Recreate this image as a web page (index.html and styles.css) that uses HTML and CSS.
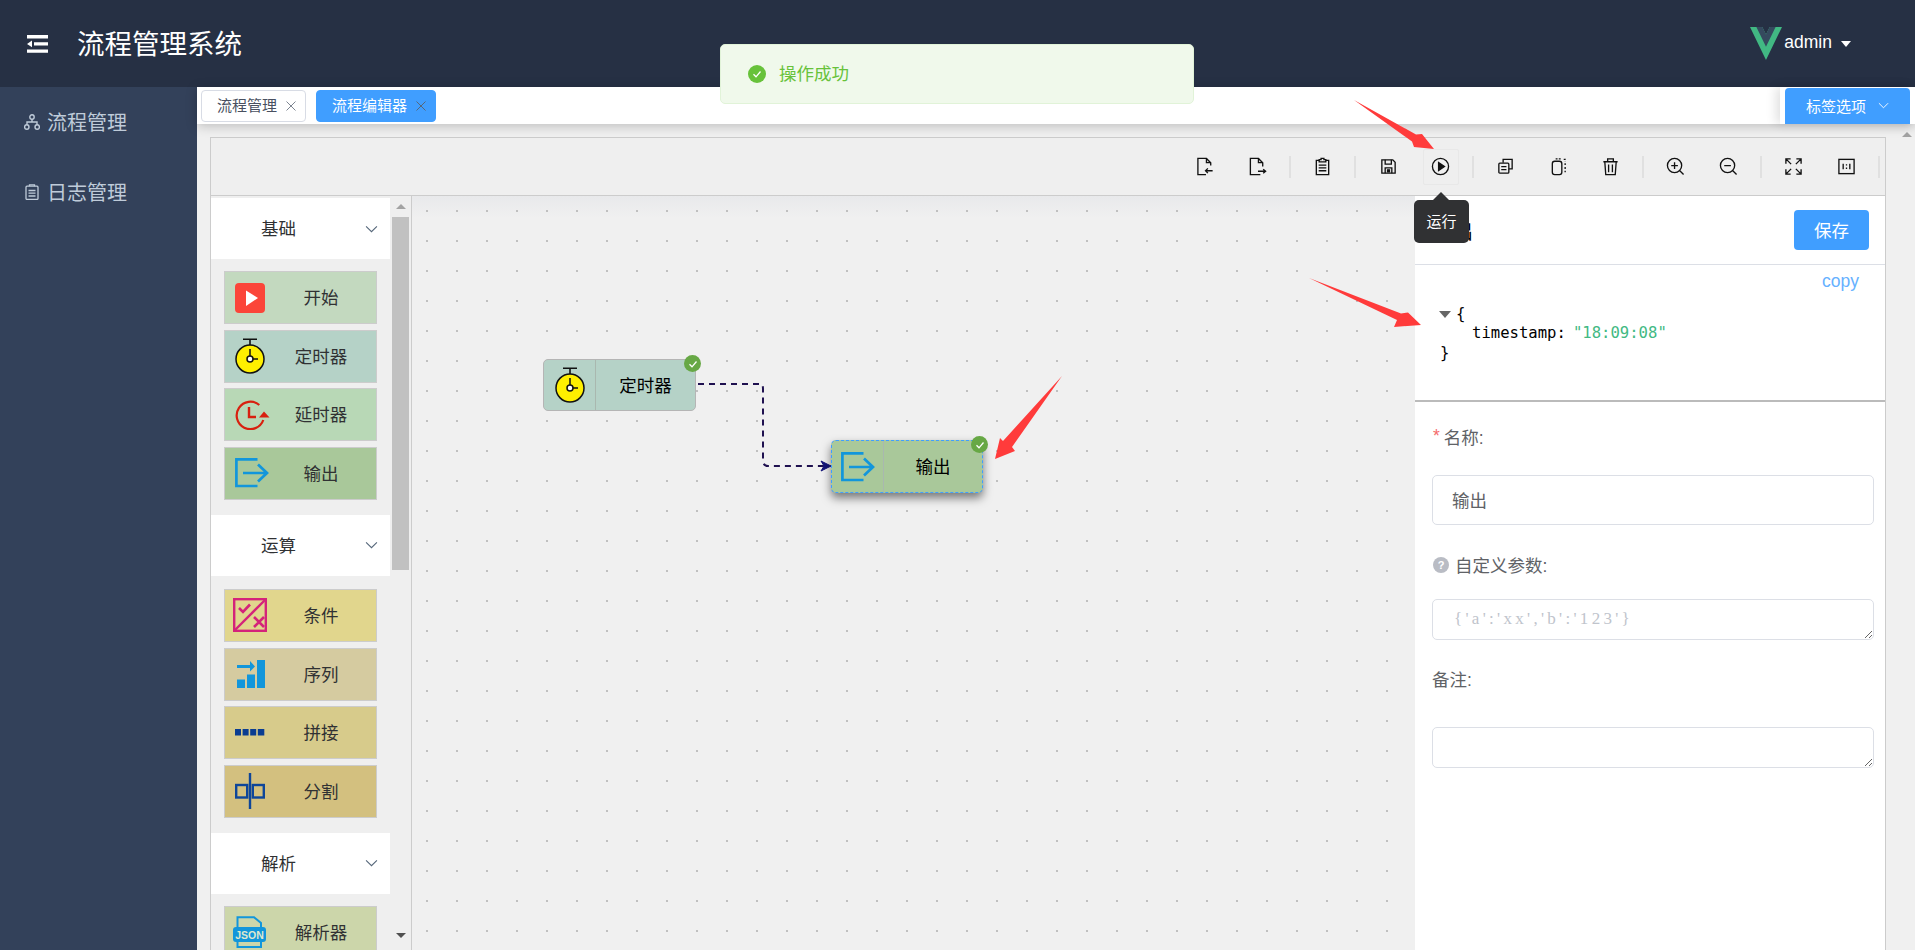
FILE: index.html
```html
<!DOCTYPE html>
<html lang="zh-CN">
<head>
  <meta charset="UTF-8" />
  <title>流程管理系统</title>
  <link rel="stylesheet" href="styles.css">
</head>
<body>
  <svg class="svg-defs" xmlns="http://www.w3.org/2000/svg">
    <symbol id="i-timer" viewBox="0 0 30 36">
      <path d="M8 1.2H22M15 1.2V7" fill="none" stroke="#111" stroke-width="1.6"/>
      <circle cx="15" cy="21" r="14" fill="#ffef00" stroke="#111" stroke-width="1.5"/>
      <path d="M15 11V18M18 21H23" fill="none" stroke="#111" stroke-width="1.5"/>
      <circle cx="15" cy="21" r="3" fill="#fff" stroke="#111" stroke-width="1.5"/>
    </symbol>
    <symbol id="i-output" viewBox="0 0 34 30">
      <path d="M22.5 1.4H1.4V28H22.5" fill="none" stroke="#1296db" stroke-width="2.7"/>
      <path d="M8 15H31M23 6.5L32 15L23 23.5" fill="none" stroke="#1296db" stroke-width="2.7"/>
    </symbol>
  </svg>

  <header class="navbar">
    <svg class="fold" viewBox="0 0 21 18">
      <path d="M0 0H21V3.4H0ZM0 14.4H21V17.8H0ZM7 7.2H21V10.6H7ZM0 8.9L5 5.6V12.2Z" fill="#fff"/>
    </svg>
    <h1 class="app-title">流程管理系统</h1>
    <div class="user">
      <svg class="vue-logo" viewBox="0 0 261.76 226.69" preserveAspectRatio="none">
        <path d="M161.096.001l-30.225 52.351L100.647.001H-.005l130.877 226.688L261.749.001z" fill="#41b883"/>
        <path d="M161.096.001l-30.225 52.351L100.647.001H52.346l78.526 136.01L209.398.001z" fill="#35495e"/>
      </svg>
      <span class="user-name">admin</span>
      <span class="caret"></span>
    </div>
  </header>

  <div class="layout">
    <aside class="sidebar">
      <a class="menu-item">
        <svg class="menu-icon" viewBox="0 0 16 16" fill="none" stroke="#bfcbd9" stroke-width="1.4">
          <circle cx="8" cy="3" r="2.2"/><circle cx="2.8" cy="13" r="2.2"/><circle cx="13.2" cy="13" r="2.2"/>
          <path d="M8 5.2V8M3 10.8V8H13V10.8"/>
        </svg>
        <span class="menu-text">流程管理</span>
      </a>
      <a class="menu-item">
        <svg class="menu-icon" viewBox="0 0 16 16" fill="none" stroke="#bfcbd9" stroke-width="1.3">
          <rect x="2" y="2.2" width="12" height="13.2" rx="1"/>
          <path d="M5.5 2.2V.8H10.5V2.2M4.5 6.5H11.5M4.5 9.2H11.5M4.5 12H11.5"/>
        </svg>
        <span class="menu-text">日志管理</span>
      </a>
    </aside>

    <main class="content">
      <div class="tags-bar">
        <span class="tag"><span class="tag-text">流程管理</span>
          <svg class="tag-close" viewBox="0 0 10 10"><path d="M.5 .5L9.5 9.5M9.5 .5L.5 9.5"/></svg>
        </span>
        <span class="tag tag-active"><span class="tag-text">流程编辑器</span>
          <svg class="tag-close" viewBox="0 0 10 10"><path d="M.5 .5L9.5 9.5M9.5 .5L.5 9.5"/></svg>
        </span>
        <div class="tag-options">
          <button class="tag-options-btn">标签选项
            <svg class="chevron chevron-white" viewBox="0 0 12 7"><path d="M1 1L6 6L11 1"/></svg>
          </button>
        </div>
      </div>

      <div class="page">
        <div class="editor">
          <div class="toolbar">
            <span class="tool" title="导入">
              <svg viewBox="0 0 20 20"><path d="M15.500 9V6L11 1.500H2V18.500H10.500"/><path d="M11 1.500V6H15.500"/><path d="M17.500 14.500H10M12.500 12L10 14.500L12.500 17"/></svg>
            </span>
            <span class="tool" title="导出">
              <svg viewBox="0 0 20 20"><path d="M15.500 10V6L11 1.500H2.500V18.500H13"/><path d="M11 1.500V6H15.500"/><path d="M10.500 15H18M16 13L18.500 15L16 17"/></svg>
            </span>
            <span class="tool-sep"></span>
            <span class="tool" title="粘贴板">
              <svg viewBox="0 0 20 20"><path d="M6.500 3.500H3.500V18.500H16.500V3.500H13.500"/><path d="M6.500 5.200V2.700H8.500V1.500H11.500V2.700H13.500V5.200Z"/><path d="M6 8.500H14M6 11.500H14M6 14.500H14"/></svg>
            </span>
            <span class="tool-sep"></span>
            <span class="tool" title="保存">
              <svg viewBox="0 0 20 20"><path d="M3 3H14.500L17 5.500V17H3Z"/><path d="M6.500 3V7.500H13V3M6.500 17V11.500H13.500V17"/><path d="M9 13.500H11V15.500H9Z" class="solid"/></svg>
            </span>
            <span class="tool tool-hover" title="运行">
              <svg viewBox="0 0 20 20"><circle cx="10" cy="10" r="8.500"/><path d="M8 5.800L14.200 10L8 14.200Z" class="solid"/></svg>
            </span>
            <span class="tool-sep"></span>
            <span class="tool" title="复制">
              <svg viewBox="0 0 20 20"><path d="M7.500 6V2.500H17V12.500H13.500"/><rect x="3" y="6.500" width="10.500" height="10.500" rx="1"/><path d="M5.500 10.200H11M5.500 13.200H11"/></svg>
            </span>
            <span class="tool" title="克隆">
              <svg viewBox="0 0 20 20"><rect x="3.500" y="4.500" width="10" height="14" rx="2.500"/><path d="M7 2H13.500M15.500 2.500H17V4.500M17 6.500V8.500M17 10.500V12.500M17 14.500V16" stroke-dasharray="2 1.300"/></svg>
            </span>
            <span class="tool" title="删除">
              <svg viewBox="0 0 20 20"><path d="M2.500 5H17.500M7 5V2H13V5M4 5L5 18.500H15L16 5M8 8V16M12 8V16"/></svg>
            </span>
            <span class="tool-sep"></span>
            <span class="tool" title="放大">
              <svg viewBox="0 0 20 20"><circle cx="9" cy="9" r="7.500"/><path d="M14.500 14.500L18.500 18.500M5.500 9H12.500M9 5.500V12.500"/></svg>
            </span>
            <span class="tool" title="缩小">
              <svg viewBox="0 0 20 20"><circle cx="9" cy="9" r="7.500"/><path d="M14.500 14.500L18.500 18.500M5.500 9H12.500"/></svg>
            </span>
            <span class="tool-sep"></span>
            <span class="tool" title="适应">
              <svg viewBox="0 0 20 20"><path d="M2 7V2H7M2 2L7.500 7.500M13 2H18V7M18 2L12.500 7.500M2 13V18H7M2 18L7.500 12.500M18 13V18H13M18 18L12.500 12.500"/></svg>
            </span>
            <span class="tool" title="实际大小">
              <svg viewBox="0 0 20 20"><rect x="2" y="2.500" width="16" height="15"/><path d="M6.500 7V13M13.500 7V13M10 7.500V9M10 11V12.500"/></svg>
            </span>
            <span class="tool-sep"></span>
          </div>

          <div class="editor-body">
            <div class="palette">
              <div class="palette-list">
                <div class="group-head">
                  <span class="group-name">基础</span>
                  <svg class="chevron" viewBox="0 0 12 7"><path d="M1 1L6 6L11 1"/></svg>
                </div>
                <div class="group-items">
                  <div class="block block-start">
                    <span class="block-icon">
                      <svg width="30" height="30" viewBox="0 0 30 30"><rect width="30" height="30" rx="4" fill="#fb4539"/><path d="M11 7.500L23 15L11 23Z" fill="#fff"/></svg>
                    </span>
                    <span class="block-name">开始</span>
                  </div>
                  <div class="block block-timer">
                    <span class="block-icon"><svg width="30" height="36"><use href="#i-timer"/></svg></span>
                    <span class="block-name">定时器</span>
                  </div>
                  <div class="block block-delay">
                    <span class="block-icon">
                      <svg width="35" height="30" viewBox="0 0 35 30" fill="none">
                        <path d="M24.300 5A13.700 13.700 0 1 0 28.300 20" stroke="#d8200f" stroke-width="2.200"/>
                        <path d="M14 7V17H21" stroke="#d8200f" stroke-width="2.400"/>
                        <path d="M24 17.500L29 11.500L34.500 17.500Z" fill="#d8200f"/>
                      </svg>
                    </span>
                    <span class="block-name">延时器</span>
                  </div>
                  <div class="block block-output">
                    <span class="block-icon"><svg width="34" height="30"><use href="#i-output"/></svg></span>
                    <span class="block-name">输出</span>
                  </div>
                </div>

                <div class="group-head">
                  <span class="group-name">运算</span>
                  <svg class="chevron" viewBox="0 0 12 7"><path d="M1 1L6 6L11 1"/></svg>
                </div>
                <div class="group-items group-items-mid">
                  <div class="block block-cond">
                    <span class="block-icon block-icon-wide">
                      <svg width="34" height="34" viewBox="0 0 34 34" fill="none" stroke="#d4237a">
                        <rect x="1.200" y="1.200" width="31.600" height="31.600" stroke-width="2.400"/>
                        <path d="M2 32L32 2" stroke-width="2.400"/>
                        <path d="M6 11L10 15L17 7.500M21 20L31 30M31 20L21 30" stroke-width="2.600" transform="translate(0 -1)"/>
                      </svg>
                    </span>
                    <span class="block-name">条件</span>
                  </div>
                  <div class="block block-seq">
                    <span class="block-icon">
                      <svg width="28" height="28" viewBox="0 0 28 28" fill="#1296db">
                        <rect y="19.500" width="8" height="8.500"/><rect x="10" y="14.500" width="8" height="13.500"/><rect x="20" width="8" height="28"/>
                        <path d="M0 5H13V1L18 6.500L13 11.500V8H0Z"/>
                      </svg>
                    </span>
                    <span class="block-name">序列</span>
                  </div>
                  <div class="block block-join">
                    <span class="block-icon">
                      <svg width="30" height="7" viewBox="0 0 30 7" fill="#0a3d91">
                        <rect width="6" height="6.500"/><rect x="7.600" width="6" height="6.500"/><rect x="15.200" width="6" height="6.500"/><rect x="22.800" width="6.500" height="6.500"/>
                      </svg>
                    </span>
                    <span class="block-name">拼接</span>
                  </div>
                  <div class="block block-split">
                    <span class="block-icon">
                      <svg width="30" height="36" viewBox="0 0 30 36" fill="none" stroke="#0e4699" stroke-width="2.400">
                        <path d="M15 0V36"/><rect x="1.200" y="12" width="11" height="12.500"/><rect x="17.800" y="12" width="11" height="12.500"/>
                      </svg>
                    </span>
                    <span class="block-name">分割</span>
                  </div>
                </div>

                <div class="group-head">
                  <span class="group-name">解析</span>
                  <svg class="chevron" viewBox="0 0 12 7"><path d="M1 1L6 6L11 1"/></svg>
                </div>
                <div class="group-items">
                  <div class="block block-parser">
                    <span class="block-icon block-icon-wide">
                      <svg width="33" height="32" viewBox="0 0 33 32">
                        <path d="M4.500 11V1.200H21L28 7V11M4.500 26V31H28V26" fill="none" stroke="#1296db" stroke-width="2"/>
                        <rect y="11" width="33" height="15" rx="3" fill="#1296db"/>
                        <text x="16.500" y="22.800" text-anchor="middle" class="json-text">JSON</text>
                      </svg>
                    </span>
                    <span class="block-name">解析器</span>
                  </div>
                </div>
              </div>
              <div class="palette-scroll">
                <span class="arrow-up"></span>
                <span class="scroll-thumb"></span>
                <span class="arrow-down"></span>
              </div>
            </div>

            <div class="canvas">
              <svg class="edges" width="1003" height="754" fill="none">
                <path d="M286 188H348Q351 188 351 193V264Q351 270 356 270H416" stroke="#1f1150" stroke-width="2" stroke-dasharray="6 5"/>
                <path d="M409 265L419 270L409 275L412 270Z" fill="#14147a" stroke="#14147a"/>
              </svg>
              <div class="node node-timer">
                <span class="node-icon"><svg width="30" height="36"><use href="#i-timer"/></svg></span>
                <span class="node-name">定时器</span>
                <span class="node-ok"><svg viewBox="0 0 10 10"><path d="M1.500 5.300L4 7.800L8.500 2.500"/></svg></span>
              </div>
              <div class="node node-output">
                <span class="node-icon"><svg width="34" height="30"><use href="#i-output"/></svg></span>
                <span class="node-name">输出</span>
                <span class="node-ok"><svg viewBox="0 0 10 10"><path d="M1.500 5.300L4 7.800L8.500 2.500"/></svg></span>
              </div>
            </div>

            <div class="props">
              <div class="props-head">
                <span class="props-title">输出</span>
                <button class="save-btn">保存</button>
              </div>
              <div class="json-view">
                <div class="json-copy">copy</div>
                <div class="json-line"><span class="json-toggle"></span>{</div>
                <div class="json-line json-indent">timestamp:<span class="json-string">"18:09:08"</span></div>
                <div class="json-line json-end">}</div>
              </div>
              <form class="props-form">
                <label class="field-label label-name"><i class="required">*</i>名称:</label>
                <input class="field-input" value="输出" />
                <label class="field-label label-params">
                  <span class="help-icon">?</span>自定义参数:
                </label>
                <textarea class="field-area" placeholder="{'a':'xx','b':'123'}"></textarea>
                <label class="field-label label-note">备注:</label>
                <textarea class="field-area"></textarea>
              </form>
            </div>
          </div>
        </div>
        <div class="page-scroll"><span class="arrow-up"></span></div>
      </div>
    </main>
  </div>

  <div class="message">
    <span class="message-icon"><svg viewBox="0 0 10 10"><path d="M1.500 5.300L4 7.800L8.500 2.500"/></svg></span>
    <span class="message-text">操作成功</span>
  </div>

  <div class="tooltip">运行</div>

  <svg class="marks" width="1915" height="950">
    <path d="M1354 100L1416 134.500L1422 134L1434 149L1414 147L1412 141.500Z"/>
    <path d="M1309 278L1401 313.500L1408 312.500L1421 325L1394 327L1397 320Z"/>
    <path d="M1062 376L1012 447L1015 451L995 459L1000 438L1003 441Z"/>
  </svg>
</body>
</html>
```

FILE: styles.css
```css
html, body {
  margin: 0;
  padding: 0;
  height: 100%;
  overflow: hidden;
  background-color: #f0f0f0;
  font-family: "Liberation Sans", "Noto Sans CJK SC", sans-serif;
  font-size: 17.5px;
  color: #303133;
}

.svg-defs {
  display: none;
}

/* top bar */
.navbar {
  display: flex;
  align-items: center;
  height: 87px;
  padding: 0 64px 0 27px;
  background-color: #263044;
}

.fold {
  width: 21px;
  height: 18px;
  margin-right: 29px;
}

.app-title {
  margin: 0 0 4px;
  font-size: 27.5px;
  font-weight: 400;
  color: #fff;
}

.user {
  display: flex;
  align-items: center;
  margin-left: auto;
  color: #fff;
}

.vue-logo {
  width: 32px;
  height: 33px;
  margin-right: 2px;
}

.user-name {
  margin-bottom: 2px;
}

.caret {
  margin-left: 9px;
  border-top: 6px solid #fff;
  border-left: 5.500px solid transparent;
  border-right: 5.500px solid transparent;
}

/* main layout */
.layout {
  display: flex;
  height: 863px;
}

.sidebar {
  flex: 0 0 197px;
  background-color: #33415a;
}

.menu-item {
  display: flex;
  align-items: center;
  gap: 7px;
  height: 70px;
  padding-left: 24px;
  font-size: 20px;
  color: #bfcbd9;
}

.menu-text {
  margin-bottom: 2px;
}

.menu-icon {
  width: 16px;
  height: 16px;
}

.content {
  display: flex;
  flex-direction: column;
  flex: 1;
  min-width: 0;
}

/* tags */
.tags-bar {
  position: relative;
  z-index: 2;
  display: flex;
  align-items: center;
  flex: 0 0 37px;
  padding-left: 4px;
  gap: 10px;
  background-color: #fff;
  box-shadow: 0 2px 12px rgba(0, 0, 0, 0.22);
}

.tag {
  display: flex;
  align-items: center;
  box-sizing: border-box;
  height: 32px;
  padding: 0 9px 0 15px;
  border: 1px solid #d8dce5;
  border-radius: 4px;
  background-color: #fff;
  font-size: 15px;
  color: #495060;
}

.tag-text {
  margin-bottom: 2px;
}

.tag-active {
  border-color: #409eff;
  background-color: #409eff;
  color: #fff;
}

.tag-close {
  width: 10px;
  height: 10px;
  margin-left: 9px;
  fill: none;
  stroke: #7d8591;
}

.tag-active .tag-close {
  stroke: #56677a;
}

.tag-options {
  display: flex;
  align-self: stretch;
  margin-left: auto;
  padding: 1px 5px 0;
  background-color: #fff;
  box-shadow: -4px 0 10px rgba(0, 0, 0, 0.12);
}

.tag-options-btn {
  display: flex;
  align-items: center;
  justify-content: center;
  gap: 12px;
  width: 125px;
  padding: 0 0 1px;
  border: none;
  border-radius: 4px 4px 0 0;
  background-color: #409eff;
  font: inherit;
  font-size: 15px;
  color: #fff;
}

.chevron {
  width: 13px;
  height: 8px;
  fill: none;
  stroke: #56677a;
  stroke-width: 1;
}

.chevron-white {
  width: 11px;
  height: 7px;
  stroke: #fff;
}

/* page */
.page {
  display: flex;
  flex: 1;
  min-height: 0;
}

.editor {
  display: flex;
  flex-direction: column;
  box-sizing: border-box;
  width: 1676px;
  margin: 13px 0 0 13px;
  border: 1px solid #ccc;
  border-bottom: none;
  background-color: #efefef;
}

.toolbar {
  position: relative;
  z-index: 1;
  display: flex;
  align-items: center;
  justify-content: flex-end;
  box-sizing: border-box;
  flex: 0 0 58px;
  border-bottom: 1px solid #ccc;
  background-color: #efefef;
}

.tool {
  display: flex;
  align-items: center;
  justify-content: center;
  box-sizing: border-box;
  width: 36px;
  height: 36px;
  margin: 0 8.250px;
  border: 1px solid transparent;
  border-radius: 2px;
}

.tool-hover {
  border-color: #e8e8e8;
}

.tool svg {
  width: 19px;
  height: 19px;
  fill: none;
  stroke: #111;
  stroke-width: 1.400;
}

.tool svg .solid {
  fill: #111;
}

.tool-sep {
  width: 2px;
  height: 22px;
  margin: 0 5.350px;
  background-color: #e0e0e0;
}

.editor-body {
  display: flex;
  flex: 1;
  min-height: 0;
}

/* node palette */
.palette {
  display: flex;
  flex: 0 0 201px;
  box-sizing: border-box;
  border-right: 1px solid #ccc;
}

.palette-list {
  flex: 0 0 179px;
  padding-top: 2px;
  overflow: hidden;
}

.group-head {
  display: flex;
  align-items: center;
  justify-content: space-between;
  height: 61px;
  padding: 0 12px 0 50px;
  background-color: #fff;
}

.group-name {
  margin-bottom: 2px;
}

.group-items {
  display: flex;
  flex-direction: column;
  gap: 5.670px;
  padding: 12px 13px 15px;
}

.group-items-mid {
  padding-top: 13px;
}

.block {
  display: flex;
  align-items: center;
  box-sizing: border-box;
  flex: 0 0 53px;
  padding-left: 10px;
  border: 1px solid #ccc;
}

.block-icon {
  display: flex;
  align-items: center;
  flex: 0 0 31px;
  min-width: 0;
  height: 30px;
}

.block-icon svg {
  flex: none;
}

.block-icon-wide svg {
  margin-left: -2px;
}

.block-seq svg {
  margin-left: 2px;
}

.block-name {
  flex: 1;
  margin-bottom: 2px;
  text-align: center;
}

.block-start { background-color: #c3d9bf; }
.block-timer { background-color: #b5d2c7; }
.block-delay { background-color: #b8d8b6; }
.block-output { background-color: #a9c89a; }
.block-cond { background-color: #e1d68d; }
.block-seq { background-color: #d5cba0; }
.block-join { background-color: #d7cb8b; }
.block-split { background-color: #d3c07f; }
.block-parser { background-color: #ccd6aa; }

.json-text {
  font-family: "Liberation Sans", sans-serif;
  font-size: 10.500px;
  font-weight: 700;
  fill: #dfe8cf;
}

.palette-scroll,
.page-scroll {
  display: flex;
  flex-direction: column;
  align-items: center;
}

.palette-scroll {
  flex: 0 0 17px;
  margin-left: 2px;
  padding-top: 8px;
}

.arrow-up {
  border-bottom: 5px solid #a3a3a3;
  border-left: 5px solid transparent;
  border-right: 5px solid transparent;
}

.arrow-down {
  margin-top: 363px;
  border-top: 5px solid #505050;
  border-left: 5px solid transparent;
  border-right: 5px solid transparent;
}

.scroll-thumb {
  width: 17px;
  height: 353px;
  margin-top: 8px;
  background-color: #c1c1c1;
}

.page-scroll {
  flex: 0 0 17px;
  margin-left: 12px;
  padding-top: 8px;
}

/* flow canvas */
.canvas {
  position: relative;
  flex: 0 0 1003px;
  background-color: #f0f0f0;
  background-image:
    radial-gradient(circle at 15px 15px, #c0c0c0 1.200px, transparent 1.500px),
    linear-gradient(#e8e9eb, #f0f0f0 22px);
  background-size: 30px 30px, 100% 100%;
}

.edges {
  position: absolute;
  top: 0;
  left: 0;
}

.node {
  position: absolute;
  display: flex;
  align-items: center;
  box-sizing: border-box;
  border: 1px solid #b5b5b5;
  border-radius: 5px;
  color: #000;
}

.node-icon {
  display: flex;
  align-items: center;
  justify-content: center;
  box-sizing: border-box;
  flex: 0 0 52px;
  align-self: stretch;
  border-right: 1px solid #a9b8af;
}

.node-name {
  flex: 1;
  margin-bottom: 2px;
  text-align: center;
}

.node-timer {
  top: 163px;
  left: 131px;
  width: 153px;
  height: 52px;
  background-color: #b5d2c7;
}

.node-output {
  top: 244px;
  left: 419px;
  width: 152px;
  height: 53px;
  border: 1px dashed #409eff;
  background-color: #a9c89a;
  box-shadow: 0 5px 10px rgba(0, 0, 0, 0.5);
}

.node-ok {
  position: absolute;
  top: -5px;
  right: -6px;
  display: flex;
  align-items: center;
  justify-content: center;
  width: 17px;
  height: 17px;
  border-radius: 50%;
  background-color: #67a845;
}

.node-ok svg,
.message-icon svg {
  width: 10px;
  height: 10px;
  fill: none;
  stroke: #fff;
  stroke-width: 1.300;
}

/* properties panel */
.props {
  flex: 1;
  min-width: 0;
  background-color: #fff;
}

.props-head {
  display: flex;
  align-items: center;
  justify-content: space-between;
  height: 68px;
  padding: 0 16px 0 18px;
  border-bottom: 1px solid #dcdfe6;
  color: #000;
}

.props-title {
  font-size: 20px;
}

.save-btn {
  width: 75px;
  height: 40px;
  padding: 0 0 2px;
  border: none;
  border-radius: 4px;
  background-color: #409eff;
  font: inherit;
  color: #fff;
}

.json-view {
  box-sizing: border-box;
  height: 137px;
  padding: 6px 26px 0 0;
  border-bottom: 2px solid #bbb;
  font-family: "DejaVu Sans Mono", monospace;
  font-size: 15.600px;
}

.json-copy {
  margin-bottom: 14px;
  font-family: "Liberation Sans", sans-serif;
  font-size: 17.500px;
  line-height: 20px;
  text-align: right;
  color: #66b1ff;
}

.json-line {
  position: relative;
  padding-left: 41px;
  line-height: 19px;
  color: #000;
}

.json-toggle {
  position: absolute;
  top: 6px;
  left: 24px;
  border-top: 7px solid #666;
  border-left: 6.500px solid transparent;
  border-right: 6.500px solid transparent;
}

.json-indent {
  padding-left: 57px;
}

.json-end {
  padding-left: 25px;
  padding-top: 1px;
}

.json-string {
  margin-left: 7px;
  color: #42b983;
}

.props-form {
  display: flex;
  flex-direction: column;
  padding: 20px 11px 0 17px;
}

.field-label {
  display: flex;
  align-items: center;
  box-sizing: border-box;
  height: 30px;
  padding-bottom: 2px;
  color: #606266;
}

.label-name { margin-bottom: 23px; }
.label-params { margin: 25px 0 19px; }
.label-note { margin: 24px 0 33px; }

.required {
  margin: 0 4px 0 1px;
  font-style: normal;
  color: #f56c6c;
}

.help-icon {
  display: flex;
  align-items: center;
  justify-content: center;
  width: 16px;
  height: 16px;
  margin: 2px 6px 0 1px;
  border-radius: 50%;
  background-color: #b9bcc4;
  font-size: 11px;
  font-weight: 700;
  color: #fff;
}

.field-input,
.field-area {
  box-sizing: border-box;
  width: 100%;
  border: 1px solid #dcdfe6;
  border-radius: 5px;
  background-color: #fff;
  font: inherit;
  color: #606266;
  outline: none;
}

.field-input {
  height: 50px;
  padding: 0 19px 2px;
}

.field-area {
  display: block;
  height: 41px;
  padding: 9px 21px 0;
}

.field-area::placeholder {
  font-family: "Liberation Serif", serif;
  font-size: 17px;
  letter-spacing: 3.300px;
  color: #c0c4cc;
}

/* overlays */
.message {
  position: fixed;
  top: 44px;
  left: 720px;
  z-index: 5;
  display: flex;
  align-items: center;
  gap: 13px;
  box-sizing: border-box;
  width: 474px;
  height: 60px;
  padding-left: 27px;
  border: 1px solid #e1f3d8;
  border-radius: 5px;
  background-color: #f0f9eb;
  color: #67c23a;
}

.message-text {
  margin-bottom: 4px;
}

.message-icon {
  display: flex;
  align-items: center;
  justify-content: center;
  width: 18px;
  height: 18px;
  border-radius: 50%;
  background-color: #67c23a;
}

.tooltip {
  position: fixed;
  top: 200px;
  left: 1414px;
  z-index: 5;
  width: 55px;
  height: 43px;
  border-radius: 5px;
  background-color: #303133;
  font-size: 15px;
  line-height: 43px;
  text-align: center;
  color: #fff;
}

.tooltip::before {
  content: "";
  position: absolute;
  top: -8px;
  left: 19px;
  border-bottom: 8px solid #303133;
  border-left: 8px solid transparent;
  border-right: 8px solid transparent;
}

.marks {
  position: fixed;
  top: 0;
  left: 0;
  z-index: 6;
  fill: #ff3b3b;
  pointer-events: none;
}
```
